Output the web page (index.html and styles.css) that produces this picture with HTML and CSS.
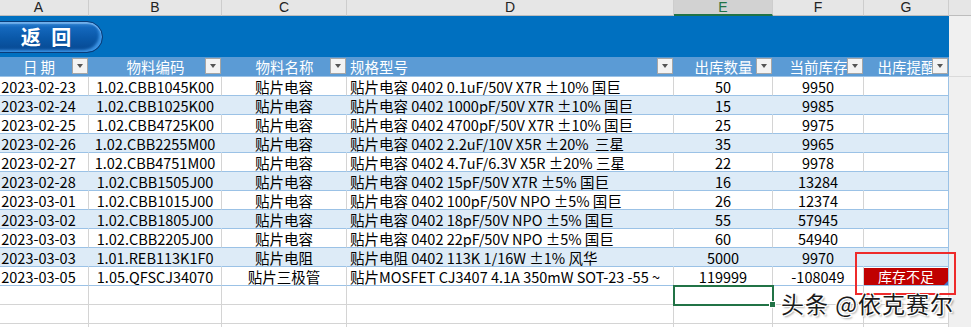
FILE: index.html
```html
<!DOCTYPE html>
<html lang="zh">
<head>
<meta charset="utf-8">
<title>出库记录</title>
<link rel="stylesheet" href="styles.css">
</head>
<body>
<div class="sheet">
  <div class="row letters">
    <div class="lc">A</div><div class="lc">B</div><div class="lc">C</div><div class="lc">D</div><div class="lc sel-col">E</div><div class="lc">F</div><div class="lc">G</div><div class="lc gray"></div>
  </div>
  <div class="row band">
    <div class="band-fill"><button class="back">返 回</button></div>
    <div class="gray"></div>
  </div>
  <div class="row head">
    <div class="hc">日 期<span class="flt"></span></div>
    <div class="hc">物料编码<span class="flt"></span></div>
    <div class="hc">物料名称<span class="flt"></span></div>
    <div class="hc left">规格型号<span class="flt"></span></div>
    <div class="hc">出库数量<span class="flt"></span></div>
    <div class="hc">当前库存<span class="flt"></span></div>
    <div class="hc">出库提醒<span class="flt"></span></div>
    <div class="gray gline"></div>
  </div>

  <div class="row data">
    <div class="c">2023-02-23</div><div class="c">1.02.CBB1045K00</div><div class="c">贴片电容</div><div class="c left">贴片电容 0402 0.1uF/50V X7R ±10% 国巨</div><div class="c">50</div><div class="c">9950</div><div class="c last"></div><div class="gray"></div>
  </div>
  <div class="row data alt">
    <div class="c">2023-02-24</div><div class="c">1.02.CBB1025K00</div><div class="c">贴片电容</div><div class="c left">贴片电容 0402 1000pF/50V X7R ±10% 国巨</div><div class="c">15</div><div class="c">9985</div><div class="c last"></div><div class="gray"></div>
  </div>
  <div class="row data">
    <div class="c">2023-02-25</div><div class="c">1.02.CBB4725K00</div><div class="c">贴片电容</div><div class="c left">贴片电容 0402 4700pF/50V X7R ±10% 国巨</div><div class="c">25</div><div class="c">9975</div><div class="c last"></div><div class="gray"></div>
  </div>
  <div class="row data alt">
    <div class="c">2023-02-26</div><div class="c">1.02.CBB2255M00</div><div class="c">贴片电容</div><div class="c left">贴片电容 0402 2.2uF/10V X5R ±20%&nbsp; 三星</div><div class="c">35</div><div class="c">9965</div><div class="c last"></div><div class="gray"></div>
  </div>
  <div class="row data">
    <div class="c">2023-02-27</div><div class="c">1.02.CBB4751M00</div><div class="c">贴片电容</div><div class="c left">贴片电容 0402 4.7uF/6.3V X5R ±20% 三星</div><div class="c">22</div><div class="c">9978</div><div class="c last"></div><div class="gray"></div>
  </div>
  <div class="row data alt">
    <div class="c">2023-02-28</div><div class="c">1.02.CBB1505J00</div><div class="c">贴片电容</div><div class="c left">贴片电容 0402 15pF/50V X7R ±5% 国巨</div><div class="c">16</div><div class="c">13284</div><div class="c last"></div><div class="gray"></div>
  </div>
  <div class="row data">
    <div class="c">2023-03-01</div><div class="c">1.02.CBB1015J00</div><div class="c">贴片电容</div><div class="c left">贴片电容 0402 100pF/50V NPO ±5% 国巨</div><div class="c">26</div><div class="c">12374</div><div class="c last"></div><div class="gray"></div>
  </div>
  <div class="row data alt">
    <div class="c">2023-03-02</div><div class="c">1.02.CBB1805J00</div><div class="c">贴片电容</div><div class="c left">贴片电容 0402 18pF/50V NPO ±5% 国巨</div><div class="c">55</div><div class="c">57945</div><div class="c last"></div><div class="gray"></div>
  </div>
  <div class="row data">
    <div class="c">2023-03-03</div><div class="c">1.02.CBB2205J00</div><div class="c">贴片电容</div><div class="c left">贴片电容 0402 22pF/50V NPO ±5% 国巨</div><div class="c">60</div><div class="c">54940</div><div class="c last"></div><div class="gray"></div>
  </div>
  <div class="row data alt">
    <div class="c">2023-03-03</div><div class="c">1.01.REB113K1F0</div><div class="c">贴片电阻</div><div class="c left">贴片电阻 0402 113K 1/16W ±1% 风华</div><div class="c">5000</div><div class="c">9970</div><div class="c last"></div><div class="gray"></div>
  </div>
  <div class="row data">
    <div class="c">2023-03-05</div><div class="c">1.05.QFSCJ34070</div><div class="c">贴片三极管</div><div class="c left">贴片MOSFET CJ3407 4.1A 350mW SOT-23 -55 ~</div><div class="c">119999</div><div class="c">-108049</div><div class="c last"><span class="warn">库存不足</span></div><div class="gray"></div>
  </div>

  <div class="row empty">
    <div class="e"></div><div class="e"></div><div class="e"></div><div class="e"></div><div class="e sel"></div><div class="e"></div><div class="e"></div><div class="gray"></div>
  </div>
  <div class="row empty">
    <div class="e"></div><div class="e"></div><div class="e"></div><div class="e"></div><div class="e"></div><div class="e"></div><div class="e"></div><div class="gray"></div>
  </div>
  <div class="row empty">
    <div class="e"></div><div class="e"></div><div class="e"></div><div class="e"></div><div class="e"></div><div class="e"></div><div class="e"></div><div class="gray"></div>
  </div>
</div>
<div class="mark-box"></div>
<div class="watermark">头条 @依克赛尔</div>
</body>
</html>
```
FILE: styles.css
```css
html, body {
  margin: 0;
  padding: 0;
  background: #ffffff;
  overflow: hidden;
  width: 971px;
  height: 327px;
}
body {
  position: relative;
  font-family: "Noto Sans CJK SC", "Noto Sans", sans-serif;
  color: #000;
}
.sheet {
  margin-left: -11px;
  display: flex;
  flex-direction: column;
}
.row {
  display: grid;
  grid-template-columns: 100px 133px 125px 327px 99px 91px 85px 60px;
}
.gray {
  background: #f0f0f0;
}

/* column letters */
.letters {
  height: 16px;
  background: #e6e6e6;
}
.lc {
  box-sizing: border-box;
  height: 16px;
  border-right: 1px solid #cdcdcd;
  border-bottom: 1px solid #bdbdbd;
  text-align: center;
  font-family: "Liberation Sans", sans-serif;
  font-size: 14px;
  line-height: 15px;
  color: #222;
}
.lc.sel-col {
  background: #d2d2d2;
  color: #217346;
  border-bottom: 2px solid #217346;
}
.lc.gray {
  background: #e6e6e6;
}

/* blue band */
.band {
  height: 41px;
}
.band-fill {
  grid-column: 1 / 8;
  background: #0070c0;
  padding-top: 5px;
  box-sizing: border-box;
}
.back {
  display: block;
  margin-left: -9px;
  width: 123px;
  height: 32px;
  border: 1px solid #0a3c78;
  border-radius: 16px;
  background: linear-gradient(#3a8ad6 0%, #1468bd 18%, #0a58a8 55%, #074790 100%);
  box-shadow: inset 0 2px 1px rgba(160, 210, 255, 0.55), inset -3px -2px 3px #3d95e6;
  color: #ffffff;
  font-family: "Noto Sans CJK SC", sans-serif;
  font-weight: 700;
  font-size: 20px;
  line-height: 28px;
  padding: 0 0 0 12px;
  letter-spacing: 3px;
  text-align: center;
}

/* header */
.head {
  height: 20px;
  background: #5b9bd5;
}
.hc {
  position: relative;
  box-sizing: border-box;
  height: 20px;
  border-bottom: 1px solid #9bc2e6;
  color: #ffffff;
  font-size: 14.5px;
  line-height: 19px;
  text-align: center;
  white-space: nowrap;
  overflow: hidden;
}
.hc.left {
  text-align: left;
  padding-left: 3px;
}
.gline {
  border-bottom: 1px solid #dadada;
}
.flt {
  position: absolute;
  right: 1px;
  top: 1px;
  width: 16px;
  height: 16px;
  box-sizing: border-box;
  background: #f3f3f3;
  border: 1px solid #a6a6a6;
}
.flt::after {
  content: "";
  position: absolute;
  left: 4px;
  top: 5px;
  border-left: 3.5px solid transparent;
  border-right: 3.5px solid transparent;
  border-top: 4px solid #555;
}

/* data rows */
.data {
  height: 19px;
}
.c {
  box-sizing: border-box;
  height: 19px;
  padding-top: 1px;
  border-bottom: 1px solid #9bc2e6;
  border-right: 1px solid #d4d4d4;
  font-size: 14.5px;
  line-height: 17px;
  text-align: center;
  white-space: nowrap;
  overflow: hidden;
  background: #ffffff;
}
.c.left {
  text-align: left;
  padding-left: 3px;
}
.c.last {
  border-right: 1px solid #9bc2e6;
  position: relative;
  padding-top: 0;
}
.alt .c {
  background: #ddebf7;
  border-right-color: #ddebf7;
}
.alt .c.last {
  border-right-color: #9bc2e6;
}
.warn {
  display: block;
  height: 17px;
  margin: 1px 0 0 0;
  background: #c00000;
  color: #ffffff;
  font-size: 14px;
  line-height: 17px;
  position: relative;
}
.warn::after {
  content: "";
  position: absolute;
  right: 0;
  bottom: 0;
  border-left: 4px solid transparent;
  border-bottom: 4px solid #4472c4;
}

/* empty rows */
.empty {
  height: 19px;
}
.e {
  box-sizing: border-box;
  height: 19px;
  border-bottom: 1px solid #d4d4d4;
  border-right: 1px solid #d4d4d4;
}
.e.sel {
  position: relative;
  outline: 2px solid #217346;
  outline-offset: -1px;
  z-index: 2;
}
.e.sel::after {
  content: "";
  position: absolute;
  right: -4px;
  bottom: -4px;
  width: 5px;
  height: 5px;
  background: #217346;
  border: 1px solid #ffffff;
}

/* overlays */
.mark-box {
  position: absolute;
  left: 855px;
  top: 252px;
  width: 101px;
  height: 43px;
  box-sizing: border-box;
  border: 2px solid #ee2b2b;
  z-index: 3;
}
.watermark {
  position: absolute;
  left: 781px;
  top: 288px;
  font-family: "Noto Sans CJK SC", sans-serif;
  font-size: 23px;
  line-height: 30px;
  color: #1a1a1a;
  letter-spacing: 1px;
  white-space: nowrap;
  text-shadow: 1px 1px 0 #fff, -1px -1px 0 #fff, 1px -1px 0 #fff, -1px 1px 0 #fff, 2px 2px 2px rgba(0,0,0,0.35);
  z-index: 4;
}
```
